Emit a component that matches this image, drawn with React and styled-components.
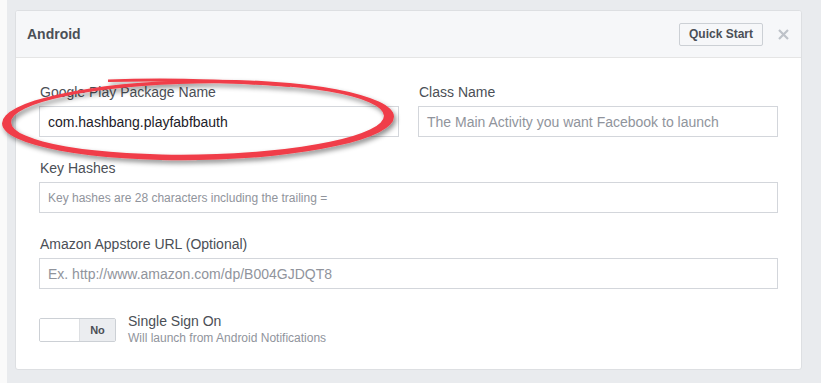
import styled, { createGlobalStyle } from "styled-components"

const GlobalStyle = createGlobalStyle`
    html, body {
        margin: 0;
        padding: 0;
        background: #fafafa;
    }
    body {
        font-family: "Liberation Sans", Arial, Helvetica, sans-serif;
        -webkit-font-smoothing: antialiased;
    }
`

function Field({ label, placeholder, value, small }) {
    return (
        <FieldBox>
            <Label>{label}</Label>
            <Input small={small} hasValue={!!value}>
                {value || placeholder}
            </Input>
        </FieldBox>
    )
}

function Scribble() {
    return (
        <Overlay width="420" height="110" viewBox="0 65 420 110">
            <defs>
                <filter id="shadow" x="-10%" y="-30%" width="120%" height="160%">
                    <feDropShadow dx="2" dy="3" stdDeviation="2.5" floodColor="#000" floodOpacity="0.45" />
                </filter>
            </defs>
            <g filter="url(#shadow)" fill="#f03e48">
                <path
                    fillRule="evenodd"
                    transform="rotate(-1 198 119)"
                    d="M2 120 A196 40 0 1 0 394 120 A196 40 0 1 0 2 120 Z
                       M11 119 A186.5 35.5 0 1 0 384 119 A186.5 35.5 0 1 0 11 119 Z"
                />
                <path d="M108 79.5 Q190 76 290 84 L290 87 Q190 79.5 108 82 Z" />
            </g>
        </Overlay>
    )
}

export default function App() {
    return (
        <Page>
            <GlobalStyle />
            <Card>
                <Header>
                    <Title>Android</Title>
                    <HeaderActions>
                        <QuickStart>Quick Start</QuickStart>
                        <Close width="11" height="11" viewBox="0 0 11 11">
                            <path d="M1 1 L10 10 M10 1 L1 10" stroke="#bec2c9" strokeWidth="2.2" />
                        </Close>
                    </HeaderActions>
                </Header>
                <Body>
                    <Columns>
                        <Field label="Google Play Package Name" value="com.hashbang.playfabfbauth" />
                        <Field label="Class Name" placeholder="The Main Activity you want Facebook to launch" />
                    </Columns>
                    <Field label="Key Hashes" placeholder="Key hashes are 28 characters including the trailing =" small />
                    <Field label="Amazon Appstore URL (Optional)" placeholder="Ex. http://www.amazon.com/dp/B004GJDQT8" />
                    <ToggleRow>
                        <Toggle>
                            <ToggleKnob />
                            <ToggleState>No</ToggleState>
                        </Toggle>
                        <ToggleText>
                            <ToggleTitle>Single Sign On</ToggleTitle>
                            <ToggleHint>Will launch from Android Notifications</ToggleHint>
                        </ToggleText>
                    </ToggleRow>
                </Body>
            </Card>
            <Scribble />
        </Page>
    )
}

const Page = styled.div`
    position: relative;
    margin-left: 7px;
    height: 383px;
    box-sizing: border-box;
    padding: 10px 19px 0 8px;
    background: #e9ebee;
`

const Card = styled.div`
    background: #fff;
    border: 1px solid #dddfe2;
    border-radius: 3px;
    height: 360px;
    box-sizing: border-box;
    overflow: hidden;
`

const Header = styled.div`
    height: 47px;
    box-sizing: border-box;
    padding: 0 11px 0 11px;
    background: #f6f7f9;
    border-bottom: 1px solid #e5e5e5;
    display: flex;
    align-items: center;
    justify-content: space-between;
`

const Title = styled.div`
    font-size: 14px;
    font-weight: 700;
    color: #4b4f56;
`

const HeaderActions = styled.div`
    display: flex;
    align-items: center;
    gap: 15px;
`

const QuickStart = styled.div`
    height: 23px;
    box-sizing: border-box;
    padding: 0 9px;
    border: 1px solid #ccd0d5;
    border-radius: 2px;
    background: #f6f7f9;
    color: #4b4f56;
    font-size: 12px;
    font-weight: 700;
    display: flex;
    align-items: center;
`

const Close = styled.svg`
    display: block;
    margin-right: 1px;
`

const Body = styled.div`
    padding: 25px 23px 0 23px;
    display: flex;
    flex-direction: column;
    gap: 22px;
`

const Columns = styled.div`
    display: grid;
    grid-template-columns: 1fr 1fr;
    gap: 19px;
`

const FieldBox = styled.div`
    display: flex;
    flex-direction: column;
    gap: 5px;
`

const Label = styled.div`
    font-size: 14px;
    line-height: 18px;
    color: #4b4f56;
    padding-left: 1px;
`

const Input = styled.div`
    height: 31px;
    box-sizing: border-box;
    border: 1px solid #d3d6db;
    padding: 0 8px;
    display: flex;
    align-items: center;
    font-size: ${props => props.small ? '12px' : '14px'};
    color: ${props => props.hasValue ? '#1d2129' : '#90949c'};
    white-space: nowrap;
    overflow: hidden;
`

const ToggleRow = styled.div`
    display: flex;
    align-items: flex-start;
    gap: 12px;
    margin-top: 2px;
`

const Toggle = styled.div`
    width: 77px;
    height: 24px;
    box-sizing: border-box;
    border: 1px solid #ccd0d5;
    border-radius: 2px;
    display: flex;
    overflow: hidden;
    margin-top: 5px;
`

const ToggleKnob = styled.div`
    width: 39px;
    background: #fff;
    border-right: 1px solid #dddfe2;
`

const ToggleState = styled.div`
    flex: 1;
    background: #ebedf0;
    color: #4b4f56;
    font-size: 11px;
    font-weight: 700;
    display: flex;
    align-items: center;
    justify-content: center;
`

const ToggleText = styled.div`
    display: flex;
    flex-direction: column;
`

const ToggleTitle = styled.div`
    font-size: 14px;
    line-height: 17px;
    color: #4b4f56;
`

const ToggleHint = styled.div`
    font-size: 12px;
    line-height: 16px;
    color: #90949c;
`

const Overlay = styled.svg`
    position: absolute;
    left: -7px;
    top: 65px;
    pointer-events: none;
`
